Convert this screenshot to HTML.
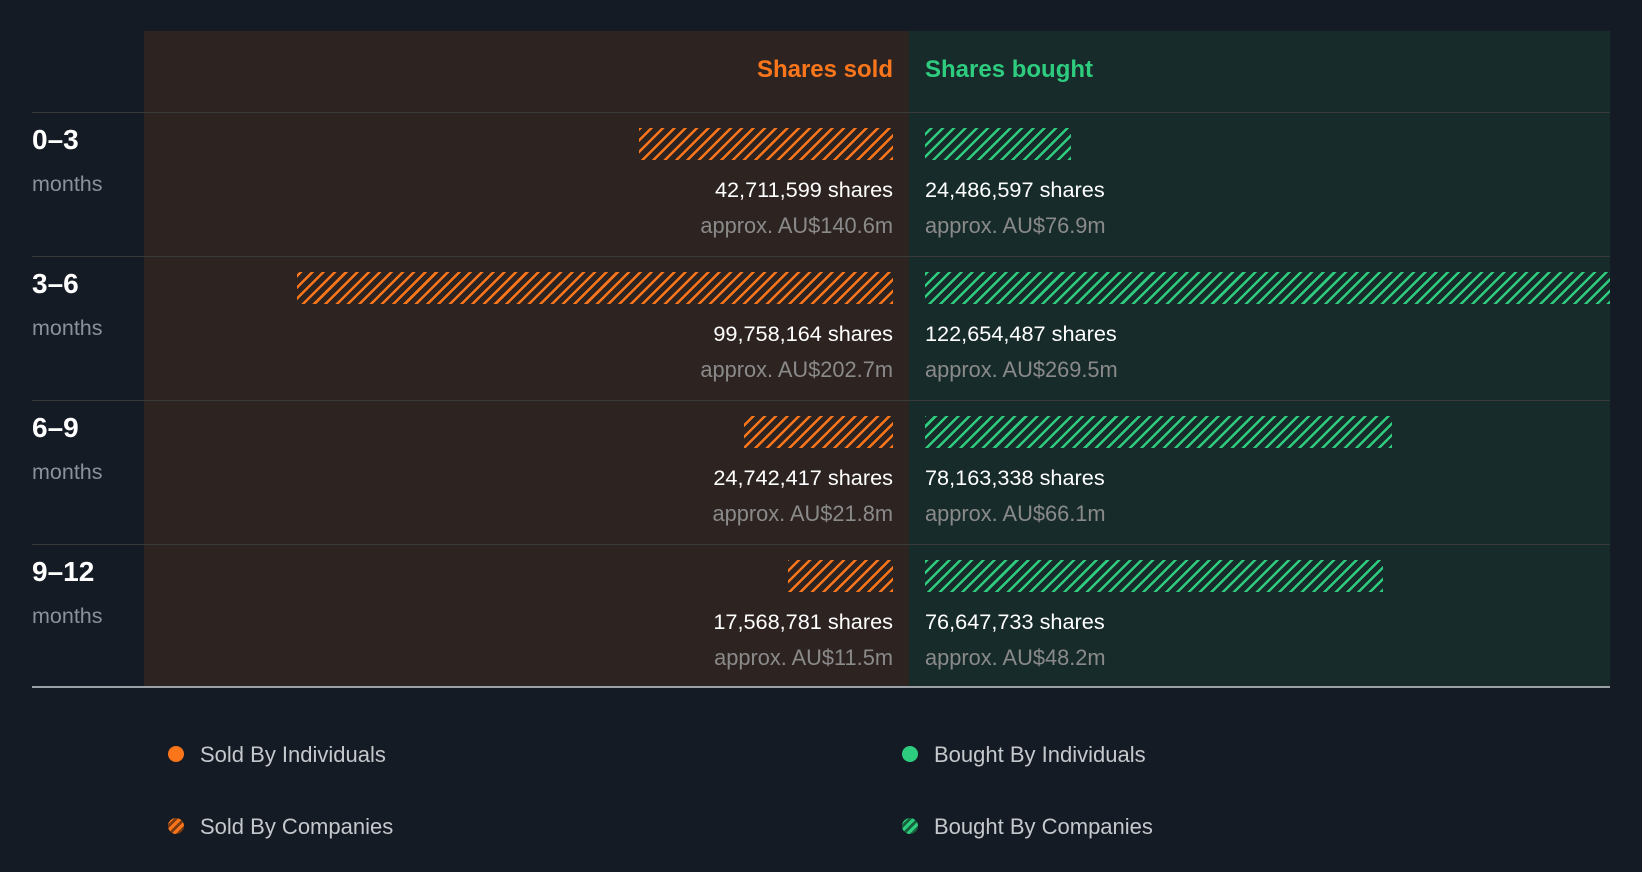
<!DOCTYPE html>
<html><head><style>
body{margin:0;width:1642px;height:872px;background:#151b24;font-family:"Liberation Sans",sans-serif;position:relative;overflow:hidden}
div{position:absolute}
.sold{left:144px;width:765px;top:31px;height:656px;background:#2d2422}
.bought{left:909px;width:701px;top:31px;height:656px;background:#172b2a}
.line{left:32px;width:1578px;height:1px;background:#3a3a3a}
.bs{background:repeating-linear-gradient(-45deg,#fb761b 0 2.5px,transparent 2.5px 8px);height:32px}
.bb{background:repeating-linear-gradient(-45deg,#2ecc7f 0 2.5px,transparent 2.5px 8px);height:32px}
.sh{font-size:21.7px;color:#fff;white-space:nowrap}
.ap{font-size:21.8px;color:#8a8a8a;white-space:nowrap}
.r{text-align:right;right:749px}
.l{left:925px}
.lab{left:32px;font-size:28px;font-weight:bold;color:#fff}
.mo{left:32px;font-size:21.5px;color:#8b9099}
.lg{font-size:22px;color:#c5c8cc}
.dot{width:16px;height:16px;border-radius:50%}
</style></head><body>
<div class="sold"></div><div class="bought"></div>
<div style="right:749px;top:56px;font-size:24px;font-weight:bold;color:#fb761b">Shares sold</div>
<div style="left:925px;top:56px;font-size:24px;font-weight:bold;color:#2ecc7f">Shares bought</div>
<div class="line" style="top:112px"></div>
<div class="line" style="top:256px"></div>
<div class="line" style="top:400px"></div>
<div class="line" style="top:544px"></div>
<div class="line" style="top:686px;height:2px;background:#9aa0a6"></div>

<div class="lab" style="top:124px">0–3</div><div class="mo" style="top:172px">months</div>
<div class="bs" style="left:639px;width:254px;top:128px"></div>
<div class="bb" style="left:925px;width:146px;top:128px"></div>
<div class="sh r" style="top:177px">42,711,599 shares</div>
<div class="ap r" style="top:213px">approx. AU$140.6m</div>
<div class="sh l" style="top:177px">24,486,597 shares</div>
<div class="ap l" style="top:213px">approx. AU$76.9m</div>

<div class="lab" style="top:268px">3–6</div><div class="mo" style="top:316px">months</div>
<div class="bs" style="left:297px;width:596px;top:272px"></div>
<div class="bb" style="left:925px;width:685px;top:272px"></div>
<div class="sh r" style="top:321px">99,758,164 shares</div>
<div class="ap r" style="top:357px">approx. AU$202.7m</div>
<div class="sh l" style="top:321px">122,654,487 shares</div>
<div class="ap l" style="top:357px">approx. AU$269.5m</div>

<div class="lab" style="top:412px">6–9</div><div class="mo" style="top:460px">months</div>
<div class="bs" style="left:744px;width:149px;top:416px"></div>
<div class="bb" style="left:925px;width:467px;top:416px"></div>
<div class="sh r" style="top:465px">24,742,417 shares</div>
<div class="ap r" style="top:501px">approx. AU$21.8m</div>
<div class="sh l" style="top:465px">78,163,338 shares</div>
<div class="ap l" style="top:501px">approx. AU$66.1m</div>

<div class="lab" style="top:556px">9–12</div><div class="mo" style="top:604px">months</div>
<div class="bs" style="left:788px;width:105px;top:560px"></div>
<div class="bb" style="left:925px;width:458px;top:560px"></div>
<div class="sh r" style="top:609px">17,568,781 shares</div>
<div class="ap r" style="top:645px">approx. AU$11.5m</div>
<div class="sh l" style="top:609px">76,647,733 shares</div>
<div class="ap l" style="top:645px">approx. AU$48.2m</div>

<div class="dot" style="left:168px;top:746px;background:#fb761b"></div>
<div class="lg" style="left:200px;top:742px">Sold By Individuals</div>
<div class="dot" style="left:168px;top:818px;background:repeating-linear-gradient(-45deg,#fb761b 0 3px,#7a3a12 3px 6px)"></div>
<div class="lg" style="left:200px;top:814px">Sold By Companies</div>
<div class="dot" style="left:902px;top:746px;background:#2ecc7f"></div>
<div class="lg" style="left:934px;top:742px">Bought By Individuals</div>
<div class="dot" style="left:902px;top:818px;background:repeating-linear-gradient(-45deg,#2ecc7f 0 3px,#16603c 3px 6px)"></div>
<div class="lg" style="left:934px;top:814px">Bought By Companies</div>
</body></html>
